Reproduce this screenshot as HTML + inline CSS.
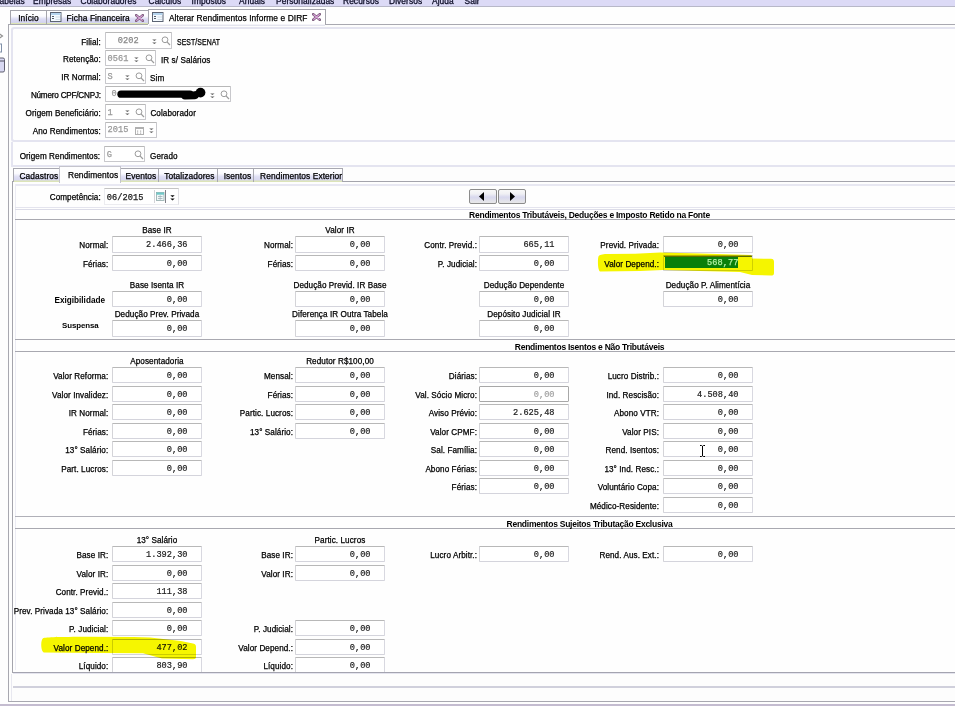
<!DOCTYPE html><html><head><meta charset="utf-8"><style>
html,body{margin:0;padding:0;}
body{width:955px;height:706px;overflow:hidden;position:relative;background:#fefefe;font-family:'Liberation Sans', sans-serif;color:#000;}
body div{position:absolute;}
.t{white-space:nowrap;line-height:1;-webkit-text-stroke:0.25px currentColor;letter-spacing:0.08px;}
.inp{background:#fff;border:1px solid #dcdce6;border-top-color:#b8b8b8;border-left-color:#d4d4d8;border-right-color:#d8d8e0;border-bottom-color:#d4d4dc;border-radius:1px;}
.dis{border-color:#a8a8a8;}
</style></head><body>
<div style="left:0px;top:0px;width:955px;height:6px;background:#dcdaf6;"></div>
<div style="left:0px;top:6px;width:955px;height:1px;background:#b8b8c8;"></div>
<div style="left:0;top:0;width:955px;height:6px;overflow:hidden;">
<div class="t" style="left:-0.5px;top:-2.71px;font-size:8.4px;color:#10102a;-webkit-text-stroke:0.3px #10102a;">abelas</div>
<div class="t" style="left:33px;top:-2.71px;font-size:8.4px;color:#10102a;-webkit-text-stroke:0.3px #10102a;">Empresas</div>
<div class="t" style="left:80.5px;top:-2.71px;font-size:8.4px;color:#10102a;-webkit-text-stroke:0.3px #10102a;">Colaboradores</div>
<div class="t" style="left:148.5px;top:-2.71px;font-size:8.4px;color:#10102a;-webkit-text-stroke:0.3px #10102a;">Cálculos</div>
<div class="t" style="left:191.5px;top:-2.71px;font-size:8.4px;color:#10102a;-webkit-text-stroke:0.3px #10102a;">Impostos</div>
<div class="t" style="left:239px;top:-2.71px;font-size:8.4px;color:#10102a;-webkit-text-stroke:0.3px #10102a;">Anuais</div>
<div class="t" style="left:276px;top:-2.71px;font-size:8.4px;color:#10102a;-webkit-text-stroke:0.3px #10102a;">Personalizadas</div>
<div class="t" style="left:343px;top:-2.71px;font-size:8.4px;color:#10102a;-webkit-text-stroke:0.3px #10102a;">Recursos</div>
<div class="t" style="left:389px;top:-2.71px;font-size:8.4px;color:#10102a;-webkit-text-stroke:0.3px #10102a;">Diversos</div>
<div class="t" style="left:432px;top:-2.71px;font-size:8.4px;color:#10102a;-webkit-text-stroke:0.3px #10102a;">Ajuda</div>
<div class="t" style="left:464.5px;top:-2.71px;font-size:8.4px;color:#10102a;-webkit-text-stroke:0.3px #10102a;">Sair</div>
</div>
<div style="left:10px;top:10px;width:35px;height:13px;border:1px solid #a4a4ac;border-bottom:none;background:linear-gradient(#ffffff 0%,#fafafe 40%,#dcdcf4 62%,#d4d4f0 88%,#dce4b4 94%,#dce4b4 100%);"></div>
<div style="left:46px;top:10px;width:101px;height:13px;border:1px solid #a4a4ac;border-bottom:none;background:linear-gradient(#ffffff 0%,#fafafe 40%,#dcdcf4 62%,#d4d4f0 88%,#dce4b4 94%,#dce4b4 100%);"></div>
<div style="left:148px;top:9px;width:176px;height:16px;border:1px solid #a4a4ac;border-bottom:none;background:#ffffff;"></div>
<div style="left:325px;top:24px;width:630px;height:1px;background:#a8a8b0;"></div>
<div class="t" style="left:18.2px;top:14.09px;font-size:8.4px;">Início</div>
<div class="t" style="left:66.6px;top:14.09px;font-size:8.4px;">Ficha Financeira</div>
<div class="t" style="left:168.9px;top:13.89px;font-size:8.4px;">Alterar Rendimentos Informe e DIRF</div>
<svg style="position:absolute;left:50px;top:12px" width="12" height="10" viewBox="0 0 12 10"><rect x="0.5" y="0.5" width="10.5" height="9" fill="#f4faff" stroke="#5c6474"/><rect x="1" y="1" width="9.5" height="2" fill="#b4d4ee"/><path d="M2 4.5 H4 M2 6.5 H4" stroke="#404a58" stroke-width="0.9"/><path d="M5.5 5 H10 M5.5 7.5 H10" stroke="#c8d4e0" stroke-width="0.8"/></svg>
<svg style="position:absolute;left:135px;top:13.5px" width="9" height="8" viewBox="0 0 9 8"><path d="M1.2 1.2 L7.8 6.8 M7.8 1.2 L1.2 6.8" stroke="#806080" stroke-width="2.6" stroke-linecap="round"/><path d="M1.4 1.4 L7.6 6.6 M7.6 1.4 L1.4 6.6" stroke="#e0a8e0" stroke-width="1.1"/></svg>
<svg style="position:absolute;left:152px;top:12px" width="12" height="10" viewBox="0 0 12 10"><rect x="0.5" y="0.5" width="10.5" height="9" fill="#f4faff" stroke="#5c6474"/><rect x="1" y="1" width="9.5" height="2" fill="#b4d4ee"/><path d="M2 4.5 H4 M2 6.5 H4" stroke="#404a58" stroke-width="0.9"/><path d="M5.5 5 H10 M5.5 7.5 H10" stroke="#c8d4e0" stroke-width="0.8"/></svg>
<svg style="position:absolute;left:312px;top:13px" width="9" height="8" viewBox="0 0 9 8"><path d="M1.2 1.2 L7.8 6.8 M7.8 1.2 L1.2 6.8" stroke="#806080" stroke-width="2.6" stroke-linecap="round"/><path d="M1.4 1.4 L7.6 6.6 M7.6 1.4 L1.4 6.6" stroke="#e0a8e0" stroke-width="1.1"/></svg>
<svg style="position:absolute;left:0;top:30px" width="8" height="45" viewBox="0 0 8 45"><path d="M-1 3.5 L2.5 6 L-1 8.5" stroke="#909090" fill="none" stroke-width="1.2"/><rect x="-2" y="14" width="3.5" height="8" fill="none" stroke="#8090a8"/><rect x="-2" y="28" width="6.5" height="14" rx="1.5" fill="#d8d8f2" stroke="#606070"/><line x1="-1" y1="31" x2="4" y2="31" stroke="#505060"/></svg>
<div style="left:8px;top:24px;width:960px;height:677px;border:1px solid #a8a8b0;border-right:none;border-top:none;background:#fdfdfd;"></div>
<div style="left:8px;top:24px;width:140px;height:1px;background:#a8a8b0;"></div>
<div style="left:149px;top:24px;width:176px;height:1px;background:#f4f4f8;"></div>
<div style="left:149px;top:25px;width:176px;height:1px;background:#e4e4ee;"></div>
<div style="left:325px;top:24px;width:630px;height:1px;background:#a8a8b0;"></div>
<div style="left:11px;top:27px;width:960px;height:111px;border:2px solid #e4e4f0;border-right:none;border-radius:3px;background:#fefefe;"></div>
<div style="left:11px;top:142px;width:960px;height:23px;border:2px solid #e4e4f0;border-top:none;border-right:none;background:#fefefe;"></div>
<div class="t" style="left:-199.2px;width:300px;text-align:right;top:38.60px;font-size:8.15px;">Filial:</div>
<div style="left:105px;top:32px;width:65px;height:15px;border:1px solid #c8c8cc;border-top-color:#b8b8b8;border-radius:1px;background:#fff;"></div>
<div class="t" style="left:117.7px;top:37.17px;font-size:8.65px;font-family:'Liberation Mono', monospace;color:#888;">0202</div>
<svg style="position:absolute;left:152px;top:38.5px" width="5" height="6" viewBox="0 0 5 6"><path d="M0.2 0.5 L4.6 0.5 L2.4 2.1 Z M0.2 3.4 L4.6 3.4 L2.4 5.0 Z" fill="#5a5a5a"/></svg>
<svg style="position:absolute;left:161px;top:36px" width="10" height="10" viewBox="0 0 10 10"><circle cx="4" cy="3.8" r="2.9" fill="none" stroke="#9c9c9c" stroke-width="1"/><path d="M6 5.9 L9 9" stroke="#9c9c9c" stroke-width="1.3"/></svg>
<div class="t" style="left:176.8px;top:39.10px;font-size:8.15px;transform:scaleX(0.85);transform-origin:0 0;">SEST/SENAT</div>
<div class="t" style="left:-199.2px;width:300px;text-align:right;top:56.40px;font-size:8.15px;">Retenção:</div>
<div style="left:105px;top:50px;width:49px;height:14px;border:1px solid #c8c8cc;border-top-color:#b8b8b8;border-radius:1px;background:#fff;"></div>
<div class="t" style="left:107.5px;top:55.17px;font-size:8.65px;font-family:'Liberation Mono', monospace;color:#999;">0561</div>
<svg style="position:absolute;left:134px;top:56.5px" width="5" height="6" viewBox="0 0 5 6"><path d="M0.2 0.5 L4.6 0.5 L2.4 2.1 Z M0.2 3.4 L4.6 3.4 L2.4 5.0 Z" fill="#5a5a5a"/></svg>
<svg style="position:absolute;left:144.5px;top:54px" width="10" height="10" viewBox="0 0 10 10"><circle cx="4" cy="3.8" r="2.9" fill="none" stroke="#9c9c9c" stroke-width="1"/><path d="M6 5.9 L9 9" stroke="#9c9c9c" stroke-width="1.3"/></svg>
<div class="t" style="left:161px;top:57.10px;font-size:8.15px;">IR s/ Salários</div>
<div class="t" style="left:-199.2px;width:300px;text-align:right;top:74.30px;font-size:8.15px;">IR Normal:</div>
<div style="left:105px;top:68px;width:39px;height:14px;border:1px solid #c8c8cc;border-top-color:#b8b8b8;border-radius:1px;background:#fff;"></div>
<div class="t" style="left:107.5px;top:73.17px;font-size:8.65px;font-family:'Liberation Mono', monospace;color:#999;">S</div>
<svg style="position:absolute;left:124.5px;top:74.5px" width="5" height="6" viewBox="0 0 5 6"><path d="M0.2 0.5 L4.6 0.5 L2.4 2.1 Z M0.2 3.4 L4.6 3.4 L2.4 5.0 Z" fill="#5a5a5a"/></svg>
<svg style="position:absolute;left:134.5px;top:72px" width="10" height="10" viewBox="0 0 10 10"><circle cx="4" cy="3.8" r="2.9" fill="none" stroke="#9c9c9c" stroke-width="1"/><path d="M6 5.9 L9 9" stroke="#9c9c9c" stroke-width="1.3"/></svg>
<div class="t" style="left:150px;top:75.10px;font-size:8.15px;">Sim</div>
<div class="t" style="left:-199.2px;width:300px;text-align:right;top:92.30px;font-size:8.15px;letter-spacing:-0.2px;">Número CPF/CNPJ:</div>
<div style="left:105px;top:86px;width:124px;height:14px;border:1px solid #c8c8cc;border-top-color:#b8b8b8;border-radius:1px;background:#fff;"></div>
<div class="t" style="left:111.5px;top:90.37px;font-size:8.65px;font-family:'Liberation Mono', monospace;color:#999;">0</div>
<svg style="position:absolute;left:117px;top:87px" width="95" height="15" viewBox="0 0 95 15"><path d="M4 7.2 L73 7.2" stroke="#000" stroke-width="7.3" stroke-linecap="round"/><path d="M68 8.6 L78 8.4" stroke="#000" stroke-width="7.6" stroke-linecap="round"/><path d="M76 8 L84 5.5" stroke="#000" stroke-width="6" stroke-linecap="round"/><circle cx="83.5" cy="5.6" r="4.9" fill="#000"/></svg>
<svg style="position:absolute;left:209.5px;top:92.5px" width="5" height="6" viewBox="0 0 5 6"><path d="M0.2 0.5 L4.6 0.5 L2.4 2.1 Z M0.2 3.4 L4.6 3.4 L2.4 5.0 Z" fill="#5a5a5a"/></svg>
<svg style="position:absolute;left:219.5px;top:90px" width="10" height="10" viewBox="0 0 10 10"><circle cx="4" cy="3.8" r="2.9" fill="none" stroke="#9c9c9c" stroke-width="1"/><path d="M6 5.9 L9 9" stroke="#9c9c9c" stroke-width="1.3"/></svg>
<div class="t" style="left:-199.2px;width:300px;text-align:right;top:109.90px;font-size:8.15px;">Origem Beneficiário:</div>
<div style="left:105px;top:104px;width:39px;height:14px;border:1px solid #c8c8cc;border-top-color:#b8b8b8;border-radius:1px;background:#fff;"></div>
<div class="t" style="left:107.5px;top:108.57px;font-size:8.65px;font-family:'Liberation Mono', monospace;color:#999;">1</div>
<svg style="position:absolute;left:124.5px;top:110px" width="5" height="6" viewBox="0 0 5 6"><path d="M0.2 0.5 L4.6 0.5 L2.4 2.1 Z M0.2 3.4 L4.6 3.4 L2.4 5.0 Z" fill="#5a5a5a"/></svg>
<svg style="position:absolute;left:134.5px;top:107.5px" width="10" height="10" viewBox="0 0 10 10"><circle cx="4" cy="3.8" r="2.9" fill="none" stroke="#9c9c9c" stroke-width="1"/><path d="M6 5.9 L9 9" stroke="#9c9c9c" stroke-width="1.3"/></svg>
<div class="t" style="left:150.4px;top:110.40px;font-size:8.15px;">Colaborador</div>
<div class="t" style="left:-199.2px;width:300px;text-align:right;top:127.90px;font-size:8.15px;">Ano Rendimentos:</div>
<div style="left:105px;top:122px;width:50px;height:14px;border:1px solid #c8c8cc;border-top-color:#b8b8b8;border-radius:1px;background:#fff;"></div>
<div class="t" style="left:107.5px;top:126.17px;font-size:8.65px;font-family:'Liberation Mono', monospace;color:#999;">2015</div>
<svg style="position:absolute;left:134.5px;top:127px" width="9" height="8" viewBox="0 0 9 8"><rect x="0.5" y="0.5" width="8" height="7" fill="none" stroke="#b0b0b0"/><rect x="0.5" y="0.5" width="8" height="1.5" fill="#b0b0b0"/><rect x="2" y="3.5" width="1.2" height="1.2" fill="#b0b0b0"/><rect x="5" y="3.5" width="1.2" height="1.2" fill="#b0b0b0"/><rect x="2" y="5.5" width="1.2" height="1.2" fill="#b0b0b0"/><rect x="5" y="5.5" width="1.2" height="1.2" fill="#b0b0b0"/></svg>
<svg style="position:absolute;left:148.5px;top:128px" width="5" height="6" viewBox="0 0 5 6"><path d="M0.2 0.5 L4.6 0.5 L2.4 2.1 Z M0.2 3.4 L4.6 3.4 L2.4 5.0 Z" fill="#5a5a5a"/></svg>
<div class="t" style="left:-199.8px;width:300px;text-align:right;top:153.30px;font-size:8.15px;">Origem Rendimentos:</div>
<div style="left:104px;top:146px;width:39px;height:14px;border:1px solid #c8c8cc;border-top-color:#b8b8b8;border-radius:1px;background:#fff;"></div>
<div class="t" style="left:106.7px;top:150.87px;font-size:8.65px;font-family:'Liberation Mono', monospace;color:#999;">G</div>
<svg style="position:absolute;left:133.5px;top:149.5px" width="10" height="10" viewBox="0 0 10 10"><circle cx="4" cy="3.8" r="2.9" fill="none" stroke="#9c9c9c" stroke-width="1"/><path d="M6 5.9 L9 9" stroke="#9c9c9c" stroke-width="1.3"/></svg>
<div class="t" style="left:150px;top:153.30px;font-size:8.15px;">Gerado</div>
<div style="left:12px;top:181px;width:960px;height:490px;border:1px solid #a4a4ac;border-right:none;background:#fefefe;"></div>
<div style="left:15px;top:184px;width:960px;height:2px;background:#e8e8f2;"></div>
<div style="left:15px;top:184px;width:1px;height:486px;background:#ececf4;"></div>
<div style="left:13px;top:168px;width:46px;height:13px;border:1px solid #a8a8b0;border-bottom:none;background:linear-gradient(#ffffff 0%,#fafafe 35%,#dedef4 60%,#d8d8f0 85%,#dce4b8 92%,#dce4b8 100%);"></div>
<div class="t" style="left:19.4px;top:171.69px;font-size:8.4px;">Cadastros</div>
<div style="left:120px;top:168px;width:38px;height:13px;border:1px solid #a8a8b0;border-bottom:none;background:linear-gradient(#ffffff 0%,#fafafe 35%,#dedef4 60%,#d8d8f0 85%,#dce4b8 92%,#dce4b8 100%);"></div>
<div class="t" style="left:125.5px;top:171.69px;font-size:8.4px;">Eventos</div>
<div style="left:158px;top:168px;width:59px;height:13px;border:1px solid #a8a8b0;border-bottom:none;background:linear-gradient(#ffffff 0%,#fafafe 35%,#dedef4 60%,#d8d8f0 85%,#dce4b8 92%,#dce4b8 100%);"></div>
<div class="t" style="left:164.2px;top:171.69px;font-size:8.4px;">Totalizadores</div>
<div style="left:217px;top:168px;width:36px;height:13px;border:1px solid #a8a8b0;border-bottom:none;background:linear-gradient(#ffffff 0%,#fafafe 35%,#dedef4 60%,#d8d8f0 85%,#dce4b8 92%,#dce4b8 100%);"></div>
<div class="t" style="left:223.7px;top:171.69px;font-size:8.4px;">Isentos</div>
<div style="left:253px;top:168px;width:88px;height:13px;border:1px solid #a8a8b0;border-bottom:none;background:linear-gradient(#ffffff 0%,#fafafe 35%,#dedef4 60%,#d8d8f0 85%,#dce4b8 92%,#dce4b8 100%);"></div>
<div class="t" style="left:260.1px;top:171.69px;font-size:8.4px;">Rendimentos Exterior</div>
<div style="left:59px;top:166px;width:60px;height:16px;border:1px solid #c4c4cc;border-bottom:none;background:#fefefe;"></div>
<div class="t" style="left:68px;top:171.09px;font-size:8.4px;">Rendimentos</div>
<div class="t" style="left:-199.2px;width:300px;text-align:right;top:194.30px;font-size:8.15px;">Competência:</div>
<div style="left:104px;top:188px;width:73px;height:15px;border:1px solid #ececf0;border-top-color:#c4c4c4;border-right-color:#e0e0e4;background:#fff;"></div>
<div class="t" style="left:106.8px;top:193.87px;font-size:8.65px;font-family:'Liberation Mono', monospace;color:#202020;">06/2015</div>
<div style="left:154px;top:190px;width:1px;height:13px;background:#d4d4d8;"></div>
<div style="left:165px;top:190px;width:1px;height:13px;background:#808088;"></div>
<svg style="position:absolute;left:156px;top:191.5px" width="9" height="9" viewBox="0 0 9 9"><rect x="0.5" y="0.5" width="7.5" height="8" fill="#f0f8f8" stroke="#90a8a8" stroke-width="0.8"/><rect x="0.5" y="0.5" width="7.5" height="2.2" fill="#70c8c8"/><path d="M2 4.5 H6.5 M2 6.5 H6.5" stroke="#a0b0b8" stroke-width="0.8"/><path d="M4.2 3 V8" stroke="#a0b0b8" stroke-width="0.6"/></svg>
<svg style="position:absolute;left:169.5px;top:194.5px" width="5" height="6" viewBox="0 0 5 6"><path d="M0.3 0.3 L4.7 0.3 L2.5 2.2 Z M0.3 3.5 L4.7 3.5 L2.5 5.6 Z" fill="#101010"/></svg>
<div style="left:468.5px;top:189px;width:26px;height:13px;border:1px solid #8c8c8c;border-radius:2px;background:linear-gradient(#f8f8f8 0%,#f0f0f4 30%,#d8d8ee 55%,#e8e8e8 100%);"></div>
<svg style="position:absolute;left:478.5px;top:192px" width="6" height="9" viewBox="0 0 6 9"><path d="M5 0 L5 9 L0 4.5 Z" fill="#000"/></svg>
<div style="left:498px;top:189px;width:26px;height:13px;border:1px solid #8c8c8c;border-radius:2px;background:linear-gradient(#f8f8f8 0%,#f0f0f4 30%,#d8d8ee 55%,#e8e8e8 100%);"></div>
<svg style="position:absolute;left:510px;top:192px" width="6" height="9" viewBox="0 0 6 9"><path d="M0 0 L0 9 L5 4.5 Z" fill="#000"/></svg>
<div style="left:15px;top:207px;width:960px;height:1px;background:#e4e4ee;"></div>
<div style="left:15px;top:209px;width:960px;height:1px;background:#dcdce8;"></div>
<div style="left:15px;top:219px;width:960px;height:1px;background:#a8a8b0;"></div>
<div class="t" style="left:389.5px;width:400px;text-align:center;top:210.80px;font-size:8.5px;font-weight:bold;color:#000;letter-spacing:-0.25px;-webkit-text-stroke:0;">Rendimentos Tributáveis, Deduções e Imposto Retido na Fonte</div>
<div style="left:15px;top:339px;width:960px;height:1px;background:#a8a8b0;"></div>
<div class="t" style="left:-43.0px;width:400px;text-align:center;top:226.90px;font-size:8.15px;">Base IR</div>
<div class="t" style="left:140.0px;width:400px;text-align:center;top:226.90px;font-size:8.15px;">Valor IR</div>
<div class="inp" style="left:112px;top:236px;width:88px;height:15px;"></div>
<div class="t" style="left:-112.5px;width:300px;text-align:right;top:241.07px;font-size:8.65px;font-family:'Liberation Mono', monospace;color:#1a1a1a;letter-spacing:0;-webkit-text-stroke:0.18px #1a1a1a;">2.466,36</div>
<div class="t" style="left:-191.7px;width:300px;text-align:right;top:242.10px;font-size:8.15px;">Normal:</div>
<div class="inp" style="left:295px;top:236px;width:88px;height:15px;"></div>
<div class="t" style="left:70.5px;width:300px;text-align:right;top:241.07px;font-size:8.65px;font-family:'Liberation Mono', monospace;color:#1a1a1a;letter-spacing:0;-webkit-text-stroke:0.18px #1a1a1a;">0,00</div>
<div class="t" style="left:-7.0px;width:300px;text-align:right;top:242.10px;font-size:8.15px;">Normal:</div>
<div class="inp" style="left:479px;top:236px;width:88px;height:15px;"></div>
<div class="t" style="left:254.5px;width:300px;text-align:right;top:241.07px;font-size:8.65px;font-family:'Liberation Mono', monospace;color:#1a1a1a;letter-spacing:0;-webkit-text-stroke:0.18px #1a1a1a;">665,11</div>
<div class="t" style="left:177.0px;width:300px;text-align:right;top:242.10px;font-size:8.15px;">Contr. Previd.:</div>
<div class="inp" style="left:663px;top:236px;width:88px;height:15px;"></div>
<div class="t" style="left:438.5px;width:300px;text-align:right;top:241.07px;font-size:8.65px;font-family:'Liberation Mono', monospace;color:#1a1a1a;letter-spacing:0;-webkit-text-stroke:0.18px #1a1a1a;">0,00</div>
<div class="t" style="left:359.0px;width:300px;text-align:right;top:242.10px;font-size:8.15px;">Previd. Privada:</div>
<div class="inp" style="left:112px;top:255px;width:88px;height:14px;"></div>
<div class="t" style="left:-112.5px;width:300px;text-align:right;top:260.07px;font-size:8.65px;font-family:'Liberation Mono', monospace;color:#1a1a1a;letter-spacing:0;-webkit-text-stroke:0.18px #1a1a1a;">0,00</div>
<div class="t" style="left:-191.7px;width:300px;text-align:right;top:261.10px;font-size:8.15px;">Férias:</div>
<div class="inp" style="left:295px;top:255px;width:88px;height:14px;"></div>
<div class="t" style="left:70.5px;width:300px;text-align:right;top:260.07px;font-size:8.65px;font-family:'Liberation Mono', monospace;color:#1a1a1a;letter-spacing:0;-webkit-text-stroke:0.18px #1a1a1a;">0,00</div>
<div class="t" style="left:-7.0px;width:300px;text-align:right;top:261.10px;font-size:8.15px;">Férias:</div>
<div class="inp" style="left:479px;top:255px;width:88px;height:14px;"></div>
<div class="t" style="left:254.5px;width:300px;text-align:right;top:260.07px;font-size:8.65px;font-family:'Liberation Mono', monospace;color:#1a1a1a;letter-spacing:0;-webkit-text-stroke:0.18px #1a1a1a;">0,00</div>
<div class="t" style="left:177.0px;width:300px;text-align:right;top:261.10px;font-size:8.15px;">P. Judicial:</div>
<div class="t" style="left:-43.0px;width:400px;text-align:center;top:281.90px;font-size:8.15px;">Base Isenta IR</div>
<div class="t" style="left:140.0px;width:400px;text-align:center;top:281.90px;font-size:8.15px;">Dedução Previd. IR Base</div>
<div class="t" style="left:324.0px;width:400px;text-align:center;top:281.90px;font-size:8.15px;">Dedução Dependente</div>
<div class="t" style="left:508.0px;width:400px;text-align:center;top:281.90px;font-size:8.15px;">Dedução P. Alimentícia</div>
<div class="inp" style="left:112px;top:291px;width:88px;height:14px;"></div>
<div class="t" style="left:-112.5px;width:300px;text-align:right;top:296.07px;font-size:8.65px;font-family:'Liberation Mono', monospace;color:#1a1a1a;letter-spacing:0;-webkit-text-stroke:0.18px #1a1a1a;">0,00</div>
<div class="inp" style="left:295px;top:291px;width:88px;height:14px;"></div>
<div class="t" style="left:70.5px;width:300px;text-align:right;top:296.07px;font-size:8.65px;font-family:'Liberation Mono', monospace;color:#1a1a1a;letter-spacing:0;-webkit-text-stroke:0.18px #1a1a1a;">0,00</div>
<div class="inp" style="left:479px;top:291px;width:88px;height:14px;"></div>
<div class="t" style="left:254.5px;width:300px;text-align:right;top:296.07px;font-size:8.65px;font-family:'Liberation Mono', monospace;color:#1a1a1a;letter-spacing:0;-webkit-text-stroke:0.18px #1a1a1a;">0,00</div>
<div class="inp" style="left:663px;top:291px;width:88px;height:14px;"></div>
<div class="t" style="left:438.5px;width:300px;text-align:right;top:296.07px;font-size:8.65px;font-family:'Liberation Mono', monospace;color:#1a1a1a;letter-spacing:0;-webkit-text-stroke:0.18px #1a1a1a;">0,00</div>
<div class="t" style="left:-43.0px;width:400px;text-align:center;top:310.90px;font-size:8.15px;">Dedução Prev. Privada</div>
<div class="t" style="left:140.0px;width:400px;text-align:center;top:310.90px;font-size:8.15px;">Diferença IR Outra Tabela</div>
<div class="t" style="left:324.0px;width:400px;text-align:center;top:310.90px;font-size:8.15px;">Depósito Judicial IR</div>
<div class="inp" style="left:112px;top:320px;width:88px;height:15px;"></div>
<div class="t" style="left:-112.5px;width:300px;text-align:right;top:325.07px;font-size:8.65px;font-family:'Liberation Mono', monospace;color:#1a1a1a;letter-spacing:0;-webkit-text-stroke:0.18px #1a1a1a;">0,00</div>
<div class="inp" style="left:295px;top:320px;width:88px;height:15px;"></div>
<div class="t" style="left:70.5px;width:300px;text-align:right;top:325.07px;font-size:8.65px;font-family:'Liberation Mono', monospace;color:#1a1a1a;letter-spacing:0;-webkit-text-stroke:0.18px #1a1a1a;">0,00</div>
<div class="inp" style="left:479px;top:320px;width:88px;height:15px;"></div>
<div class="t" style="left:254.5px;width:300px;text-align:right;top:325.07px;font-size:8.65px;font-family:'Liberation Mono', monospace;color:#1a1a1a;letter-spacing:0;-webkit-text-stroke:0.18px #1a1a1a;">0,00</div>
<div class="t" style="left:54.5px;top:296.56px;font-size:8.2px;font-weight:bold;color:#000;-webkit-text-stroke:0;letter-spacing:0;">Exigibilidade</div>
<div class="t" style="left:62px;top:321.71px;font-size:7.9px;font-weight:bold;color:#000;-webkit-text-stroke:0;letter-spacing:-0.1px;">Suspensa</div>
<div class="inp" style="left:663px;top:255px;width:88px;height:14px;"></div>
<div class="t" style="left:359.0px;width:300px;text-align:right;top:261.10px;font-size:8.15px;">Valor Depend.:</div>
<div style="left:664px;top:256px;width:88px;height:1px;background:#607080;"></div>
<div style="left:15px;top:351px;width:960px;height:1px;background:#a8a8b0;"></div>
<div class="t" style="left:389.5px;width:400px;text-align:center;top:342.80px;font-size:8.5px;font-weight:bold;color:#000;letter-spacing:-0.25px;-webkit-text-stroke:0;">Rendimentos Isentos e Não Tributáveis</div>
<div style="left:15px;top:516px;width:960px;height:1px;background:#b0b0b8;"></div>
<div class="t" style="left:-43.0px;width:400px;text-align:center;top:357.90px;font-size:8.15px;">Aposentadoria</div>
<div class="t" style="left:140.0px;width:400px;text-align:center;top:357.90px;font-size:8.15px;">Redutor R$100,00</div>
<div class="inp" style="left:112px;top:367px;width:88px;height:14px;"></div>
<div class="t" style="left:-112.5px;width:300px;text-align:right;top:372.07px;font-size:8.65px;font-family:'Liberation Mono', monospace;color:#1a1a1a;letter-spacing:0;-webkit-text-stroke:0.18px #1a1a1a;">0,00</div>
<div class="t" style="left:-191.7px;width:300px;text-align:right;top:373.10px;font-size:8.15px;">Valor Reforma:</div>
<div class="inp" style="left:112px;top:386px;width:88px;height:14px;"></div>
<div class="t" style="left:-112.5px;width:300px;text-align:right;top:391.07px;font-size:8.65px;font-family:'Liberation Mono', monospace;color:#1a1a1a;letter-spacing:0;-webkit-text-stroke:0.18px #1a1a1a;">0,00</div>
<div class="t" style="left:-191.7px;width:300px;text-align:right;top:392.10px;font-size:8.15px;">Valor Invalidez:</div>
<div class="inp" style="left:112px;top:404px;width:88px;height:14px;"></div>
<div class="t" style="left:-112.5px;width:300px;text-align:right;top:409.07px;font-size:8.65px;font-family:'Liberation Mono', monospace;color:#1a1a1a;letter-spacing:0;-webkit-text-stroke:0.18px #1a1a1a;">0,00</div>
<div class="t" style="left:-191.7px;width:300px;text-align:right;top:410.10px;font-size:8.15px;">IR Normal:</div>
<div class="inp" style="left:112px;top:423px;width:88px;height:14px;"></div>
<div class="t" style="left:-112.5px;width:300px;text-align:right;top:428.07px;font-size:8.65px;font-family:'Liberation Mono', monospace;color:#1a1a1a;letter-spacing:0;-webkit-text-stroke:0.18px #1a1a1a;">0,00</div>
<div class="t" style="left:-191.7px;width:300px;text-align:right;top:429.10px;font-size:8.15px;">Férias:</div>
<div class="inp" style="left:112px;top:441px;width:88px;height:14px;"></div>
<div class="t" style="left:-112.5px;width:300px;text-align:right;top:446.07px;font-size:8.65px;font-family:'Liberation Mono', monospace;color:#1a1a1a;letter-spacing:0;-webkit-text-stroke:0.18px #1a1a1a;">0,00</div>
<div class="t" style="left:-191.7px;width:300px;text-align:right;top:447.10px;font-size:8.15px;">13° Salário:</div>
<div class="inp" style="left:112px;top:460px;width:88px;height:14px;"></div>
<div class="t" style="left:-112.5px;width:300px;text-align:right;top:465.07px;font-size:8.65px;font-family:'Liberation Mono', monospace;color:#1a1a1a;letter-spacing:0;-webkit-text-stroke:0.18px #1a1a1a;">0,00</div>
<div class="t" style="left:-191.7px;width:300px;text-align:right;top:466.10px;font-size:8.15px;">Part. Lucros:</div>
<div class="inp" style="left:295px;top:367px;width:88px;height:14px;"></div>
<div class="t" style="left:70.5px;width:300px;text-align:right;top:372.07px;font-size:8.65px;font-family:'Liberation Mono', monospace;color:#1a1a1a;letter-spacing:0;-webkit-text-stroke:0.18px #1a1a1a;">0,00</div>
<div class="t" style="left:-7.0px;width:300px;text-align:right;top:373.10px;font-size:8.15px;">Mensal:</div>
<div class="inp" style="left:295px;top:386px;width:88px;height:14px;"></div>
<div class="t" style="left:70.5px;width:300px;text-align:right;top:391.07px;font-size:8.65px;font-family:'Liberation Mono', monospace;color:#1a1a1a;letter-spacing:0;-webkit-text-stroke:0.18px #1a1a1a;">0,00</div>
<div class="t" style="left:-7.0px;width:300px;text-align:right;top:392.10px;font-size:8.15px;">Férias:</div>
<div class="inp" style="left:295px;top:404px;width:88px;height:14px;"></div>
<div class="t" style="left:70.5px;width:300px;text-align:right;top:409.07px;font-size:8.65px;font-family:'Liberation Mono', monospace;color:#1a1a1a;letter-spacing:0;-webkit-text-stroke:0.18px #1a1a1a;">0,00</div>
<div class="t" style="left:-7.0px;width:300px;text-align:right;top:410.10px;font-size:8.15px;">Partic. Lucros:</div>
<div class="inp" style="left:295px;top:423px;width:88px;height:14px;"></div>
<div class="t" style="left:70.5px;width:300px;text-align:right;top:428.07px;font-size:8.65px;font-family:'Liberation Mono', monospace;color:#1a1a1a;letter-spacing:0;-webkit-text-stroke:0.18px #1a1a1a;">0,00</div>
<div class="t" style="left:-7.0px;width:300px;text-align:right;top:429.10px;font-size:8.15px;">13° Salário:</div>
<div class="inp" style="left:479px;top:367px;width:88px;height:14px;"></div>
<div class="t" style="left:254.5px;width:300px;text-align:right;top:372.07px;font-size:8.65px;font-family:'Liberation Mono', monospace;color:#1a1a1a;letter-spacing:0;-webkit-text-stroke:0.18px #1a1a1a;">0,00</div>
<div class="t" style="left:177.0px;width:300px;text-align:right;top:373.10px;font-size:8.15px;">Diárias:</div>
<div class="inp dis" style="left:479px;top:386px;width:88px;height:14px;"></div>
<div class="t" style="left:254.5px;width:300px;text-align:right;top:391.07px;font-size:8.65px;font-family:'Liberation Mono', monospace;color:#a0a0a0;letter-spacing:0;-webkit-text-stroke:0.18px #a0a0a0;">0,00</div>
<div class="t" style="left:177.0px;width:300px;text-align:right;top:392.10px;font-size:8.15px;">Val. Sócio Micro:</div>
<div class="inp" style="left:479px;top:404px;width:88px;height:14px;"></div>
<div class="t" style="left:254.5px;width:300px;text-align:right;top:409.07px;font-size:8.65px;font-family:'Liberation Mono', monospace;color:#1a1a1a;letter-spacing:0;-webkit-text-stroke:0.18px #1a1a1a;">2.625,48</div>
<div class="t" style="left:177.0px;width:300px;text-align:right;top:410.10px;font-size:8.15px;">Aviso Prévio:</div>
<div class="inp" style="left:479px;top:423px;width:88px;height:14px;"></div>
<div class="t" style="left:254.5px;width:300px;text-align:right;top:428.07px;font-size:8.65px;font-family:'Liberation Mono', monospace;color:#1a1a1a;letter-spacing:0;-webkit-text-stroke:0.18px #1a1a1a;">0,00</div>
<div class="t" style="left:177.0px;width:300px;text-align:right;top:429.10px;font-size:8.15px;">Valor CPMF:</div>
<div class="inp" style="left:479px;top:441px;width:88px;height:14px;"></div>
<div class="t" style="left:254.5px;width:300px;text-align:right;top:446.07px;font-size:8.65px;font-family:'Liberation Mono', monospace;color:#1a1a1a;letter-spacing:0;-webkit-text-stroke:0.18px #1a1a1a;">0,00</div>
<div class="t" style="left:177.0px;width:300px;text-align:right;top:447.10px;font-size:8.15px;">Sal. Família:</div>
<div class="inp" style="left:479px;top:460px;width:88px;height:14px;"></div>
<div class="t" style="left:254.5px;width:300px;text-align:right;top:465.07px;font-size:8.65px;font-family:'Liberation Mono', monospace;color:#1a1a1a;letter-spacing:0;-webkit-text-stroke:0.18px #1a1a1a;">0,00</div>
<div class="t" style="left:177.0px;width:300px;text-align:right;top:466.10px;font-size:8.15px;">Abono Férias:</div>
<div class="inp" style="left:479px;top:478px;width:88px;height:14px;"></div>
<div class="t" style="left:254.5px;width:300px;text-align:right;top:483.07px;font-size:8.65px;font-family:'Liberation Mono', monospace;color:#1a1a1a;letter-spacing:0;-webkit-text-stroke:0.18px #1a1a1a;">0,00</div>
<div class="t" style="left:177.0px;width:300px;text-align:right;top:484.10px;font-size:8.15px;">Férias:</div>
<div class="inp" style="left:663px;top:367px;width:88px;height:14px;"></div>
<div class="t" style="left:438.5px;width:300px;text-align:right;top:372.07px;font-size:8.65px;font-family:'Liberation Mono', monospace;color:#1a1a1a;letter-spacing:0;-webkit-text-stroke:0.18px #1a1a1a;">0,00</div>
<div class="t" style="left:359.0px;width:300px;text-align:right;top:373.10px;font-size:8.15px;">Lucro Distrib.:</div>
<div class="inp" style="left:663px;top:386px;width:88px;height:14px;"></div>
<div class="t" style="left:438.5px;width:300px;text-align:right;top:391.07px;font-size:8.65px;font-family:'Liberation Mono', monospace;color:#1a1a1a;letter-spacing:0;-webkit-text-stroke:0.18px #1a1a1a;">4.508,40</div>
<div class="t" style="left:359.0px;width:300px;text-align:right;top:392.10px;font-size:8.15px;">Ind. Rescisão:</div>
<div class="inp" style="left:663px;top:404px;width:88px;height:14px;"></div>
<div class="t" style="left:438.5px;width:300px;text-align:right;top:409.07px;font-size:8.65px;font-family:'Liberation Mono', monospace;color:#1a1a1a;letter-spacing:0;-webkit-text-stroke:0.18px #1a1a1a;">0,00</div>
<div class="t" style="left:359.0px;width:300px;text-align:right;top:410.10px;font-size:8.15px;">Abono VTR:</div>
<div class="inp" style="left:663px;top:423px;width:88px;height:14px;"></div>
<div class="t" style="left:438.5px;width:300px;text-align:right;top:428.07px;font-size:8.65px;font-family:'Liberation Mono', monospace;color:#1a1a1a;letter-spacing:0;-webkit-text-stroke:0.18px #1a1a1a;">0,00</div>
<div class="t" style="left:359.0px;width:300px;text-align:right;top:429.10px;font-size:8.15px;">Valor PIS:</div>
<div class="inp" style="left:663px;top:441px;width:88px;height:14px;"></div>
<div class="t" style="left:438.5px;width:300px;text-align:right;top:446.07px;font-size:8.65px;font-family:'Liberation Mono', monospace;color:#1a1a1a;letter-spacing:0;-webkit-text-stroke:0.18px #1a1a1a;">0,00</div>
<div class="t" style="left:359.0px;width:300px;text-align:right;top:447.10px;font-size:8.15px;">Rend. Isentos:</div>
<div class="inp" style="left:663px;top:460px;width:88px;height:14px;"></div>
<div class="t" style="left:438.5px;width:300px;text-align:right;top:465.07px;font-size:8.65px;font-family:'Liberation Mono', monospace;color:#1a1a1a;letter-spacing:0;-webkit-text-stroke:0.18px #1a1a1a;">0,00</div>
<div class="t" style="left:359.0px;width:300px;text-align:right;top:466.10px;font-size:8.15px;">13° Ind. Resc.:</div>
<div class="inp" style="left:663px;top:478px;width:88px;height:14px;"></div>
<div class="t" style="left:438.5px;width:300px;text-align:right;top:483.07px;font-size:8.65px;font-family:'Liberation Mono', monospace;color:#1a1a1a;letter-spacing:0;-webkit-text-stroke:0.18px #1a1a1a;">0,00</div>
<div class="t" style="left:359.0px;width:300px;text-align:right;top:484.10px;font-size:8.15px;">Voluntário Copa:</div>
<div class="inp" style="left:663px;top:497px;width:88px;height:14px;"></div>
<div class="t" style="left:438.5px;width:300px;text-align:right;top:502.07px;font-size:8.65px;font-family:'Liberation Mono', monospace;color:#1a1a1a;letter-spacing:0;-webkit-text-stroke:0.18px #1a1a1a;">0,00</div>
<div class="t" style="left:359.0px;width:300px;text-align:right;top:503.10px;font-size:8.15px;">Médico-Residente:</div>
<svg style="position:absolute;left:699px;top:444px" width="7" height="14" viewBox="0 0 7 14"><path d="M1 1.5 H2.5 L3.5 2.3 L4.5 1.5 H6 M3.5 2 V12 M1 12.5 H2.5 L3.5 11.7 L4.5 12.5 H6" stroke="#000" fill="none" stroke-width="1"/></svg>
<div style="left:15px;top:528px;width:960px;height:1px;background:#a8a8b0;"></div>
<div class="t" style="left:389.5px;width:400px;text-align:center;top:519.80px;font-size:8.5px;font-weight:bold;color:#000;letter-spacing:-0.25px;-webkit-text-stroke:0;">Rendimentos Sujeitos Tributação Exclusiva</div>
<div class="t" style="left:-43.0px;width:400px;text-align:center;top:536.90px;font-size:8.15px;">13° Salário</div>
<div class="t" style="left:140.0px;width:400px;text-align:center;top:536.90px;font-size:8.15px;">Partic. Lucros</div>
<div class="inp" style="left:112px;top:546px;width:88px;height:14px;"></div>
<div class="t" style="left:-112.5px;width:300px;text-align:right;top:551.07px;font-size:8.65px;font-family:'Liberation Mono', monospace;color:#1a1a1a;letter-spacing:0;-webkit-text-stroke:0.18px #1a1a1a;">1.392,30</div>
<div class="t" style="left:-191.7px;width:300px;text-align:right;top:552.10px;font-size:8.15px;">Base IR:</div>
<div class="inp" style="left:112px;top:565px;width:88px;height:14px;"></div>
<div class="t" style="left:-112.5px;width:300px;text-align:right;top:570.07px;font-size:8.65px;font-family:'Liberation Mono', monospace;color:#1a1a1a;letter-spacing:0;-webkit-text-stroke:0.18px #1a1a1a;">0,00</div>
<div class="t" style="left:-191.7px;width:300px;text-align:right;top:571.10px;font-size:8.15px;">Valor IR:</div>
<div class="inp" style="left:112px;top:583px;width:88px;height:14px;"></div>
<div class="t" style="left:-112.5px;width:300px;text-align:right;top:588.07px;font-size:8.65px;font-family:'Liberation Mono', monospace;color:#1a1a1a;letter-spacing:0;-webkit-text-stroke:0.18px #1a1a1a;">111,38</div>
<div class="t" style="left:-191.7px;width:300px;text-align:right;top:589.10px;font-size:8.15px;">Contr. Previd.:</div>
<div class="inp" style="left:112px;top:602px;width:88px;height:14px;"></div>
<div class="t" style="left:-112.5px;width:300px;text-align:right;top:607.07px;font-size:8.65px;font-family:'Liberation Mono', monospace;color:#1a1a1a;letter-spacing:0;-webkit-text-stroke:0.18px #1a1a1a;">0,00</div>
<div class="t" style="left:-191.7px;width:300px;text-align:right;top:608.10px;font-size:8.15px;">Prev. Privada 13° Salário:</div>
<div class="inp" style="left:112px;top:620px;width:88px;height:14px;"></div>
<div class="t" style="left:-112.5px;width:300px;text-align:right;top:625.07px;font-size:8.65px;font-family:'Liberation Mono', monospace;color:#1a1a1a;letter-spacing:0;-webkit-text-stroke:0.18px #1a1a1a;">0,00</div>
<div class="t" style="left:-191.7px;width:300px;text-align:right;top:626.10px;font-size:8.15px;">P. Judicial:</div>
<div class="inp" style="left:112px;top:639px;width:88px;height:14px;"></div>
<div class="t" style="left:-112.5px;width:300px;text-align:right;top:644.07px;font-size:8.65px;font-family:'Liberation Mono', monospace;color:#1a1a1a;letter-spacing:0;-webkit-text-stroke:0.18px #1a1a1a;">477,02</div>
<div class="t" style="left:-191.7px;width:300px;text-align:right;top:645.10px;font-size:8.15px;">Valor Depend.:</div>
<div class="inp" style="left:112px;top:657px;width:88px;height:14px;"></div>
<div class="t" style="left:-112.5px;width:300px;text-align:right;top:662.07px;font-size:8.65px;font-family:'Liberation Mono', monospace;color:#1a1a1a;letter-spacing:0;-webkit-text-stroke:0.18px #1a1a1a;">803,90</div>
<div class="t" style="left:-191.7px;width:300px;text-align:right;top:663.10px;font-size:8.15px;">Líquido:</div>
<div class="inp" style="left:295px;top:546px;width:88px;height:14px;"></div>
<div class="t" style="left:70.5px;width:300px;text-align:right;top:551.07px;font-size:8.65px;font-family:'Liberation Mono', monospace;color:#1a1a1a;letter-spacing:0;-webkit-text-stroke:0.18px #1a1a1a;">0,00</div>
<div class="t" style="left:-7.0px;width:300px;text-align:right;top:552.10px;font-size:8.15px;">Base IR:</div>
<div class="inp" style="left:295px;top:565px;width:88px;height:14px;"></div>
<div class="t" style="left:70.5px;width:300px;text-align:right;top:570.07px;font-size:8.65px;font-family:'Liberation Mono', monospace;color:#1a1a1a;letter-spacing:0;-webkit-text-stroke:0.18px #1a1a1a;">0,00</div>
<div class="t" style="left:-7.0px;width:300px;text-align:right;top:571.10px;font-size:8.15px;">Valor IR:</div>
<div class="inp" style="left:295px;top:620px;width:88px;height:14px;"></div>
<div class="t" style="left:70.5px;width:300px;text-align:right;top:625.07px;font-size:8.65px;font-family:'Liberation Mono', monospace;color:#1a1a1a;letter-spacing:0;-webkit-text-stroke:0.18px #1a1a1a;">0,00</div>
<div class="t" style="left:-7.0px;width:300px;text-align:right;top:626.10px;font-size:8.15px;">P. Judicial:</div>
<div class="inp" style="left:295px;top:639px;width:88px;height:14px;"></div>
<div class="t" style="left:70.5px;width:300px;text-align:right;top:644.07px;font-size:8.65px;font-family:'Liberation Mono', monospace;color:#1a1a1a;letter-spacing:0;-webkit-text-stroke:0.18px #1a1a1a;">0,00</div>
<div class="t" style="left:-7.0px;width:300px;text-align:right;top:645.10px;font-size:8.15px;">Valor Depend.:</div>
<div class="inp" style="left:295px;top:657px;width:88px;height:14px;"></div>
<div class="t" style="left:70.5px;width:300px;text-align:right;top:662.07px;font-size:8.65px;font-family:'Liberation Mono', monospace;color:#1a1a1a;letter-spacing:0;-webkit-text-stroke:0.18px #1a1a1a;">0,00</div>
<div class="t" style="left:-7.0px;width:300px;text-align:right;top:663.10px;font-size:8.15px;">Líquido:</div>
<div class="inp" style="left:479px;top:546px;width:88px;height:14px;"></div>
<div class="t" style="left:254.5px;width:300px;text-align:right;top:551.07px;font-size:8.65px;font-family:'Liberation Mono', monospace;color:#1a1a1a;letter-spacing:0;-webkit-text-stroke:0.18px #1a1a1a;">0,00</div>
<div class="t" style="left:177.0px;width:300px;text-align:right;top:552.10px;font-size:8.15px;">Lucro Arbitr.:</div>
<div class="inp" style="left:663px;top:546px;width:88px;height:14px;"></div>
<div class="t" style="left:438.5px;width:300px;text-align:right;top:551.07px;font-size:8.65px;font-family:'Liberation Mono', monospace;color:#1a1a1a;letter-spacing:0;-webkit-text-stroke:0.18px #1a1a1a;">0,00</div>
<div class="t" style="left:359.0px;width:300px;text-align:right;top:552.10px;font-size:8.15px;">Rend. Aus. Ext.:</div>
<svg style="position:absolute;left:0;top:0;mix-blend-mode:multiply" width="955" height="706" viewBox="0 0 955 706"><path d="M598.7 256 C600 254.5 604 254 608 254 L635 253.7 L660 252.5 L700 253.5 L751.5 255 L752 258.5 L771 258.8 C773.5 259 774 260 774 262 L774 273 C774 275 773 275.5 771 275.5 L752 275 L740 272 L700 271 L663 270 L640 271 L600 271.5 C597.5 270 597.5 258 598.7 256 Z" fill="#f6f600"/><path d="M43 638.2 C46 637 60 636.9 86.5 636.7 L133.7 637 L150 637.5 L180.8 641 L193 643.5 C195.5 644 196 645 196 647 L196 657 C196 658.5 195 659.2 193 659.2 L162 658.5 L143 653.3 L100 653 L44 652.5 C40.5 651 40.5 640 43 638.2 Z" fill="#f6f600"/></svg>
<div style="left:665px;top:257px;width:73px;height:11px;background:#0a800a;"></div>
<div class="t" style="left:438.5px;width:300px;text-align:right;top:259.37px;font-size:8.65px;font-family:'Liberation Mono', monospace;color:#b0f0a0;">568,77</div>
<div style="left:13px;top:672px;width:960px;height:1px;background:#a4a4b0;"></div>
<div style="left:13px;top:673px;width:960px;height:2px;background:#e4e4ee;"></div>
<div style="left:13px;top:674px;width:960px;height:28px;background:#fdfdfd;"></div>
<div style="left:11px;top:674px;width:1px;height:27px;background:#e8e8f0;"></div>
<div style="left:13px;top:686px;width:960px;height:2px;background:#d0d0dc;"></div>
<div style="left:8px;top:701px;width:960px;height:1px;background:#a8a8b0;"></div>
<div style="left:0px;top:704px;width:955px;height:2px;background:#c4bcd0;"></div>
</body></html>
